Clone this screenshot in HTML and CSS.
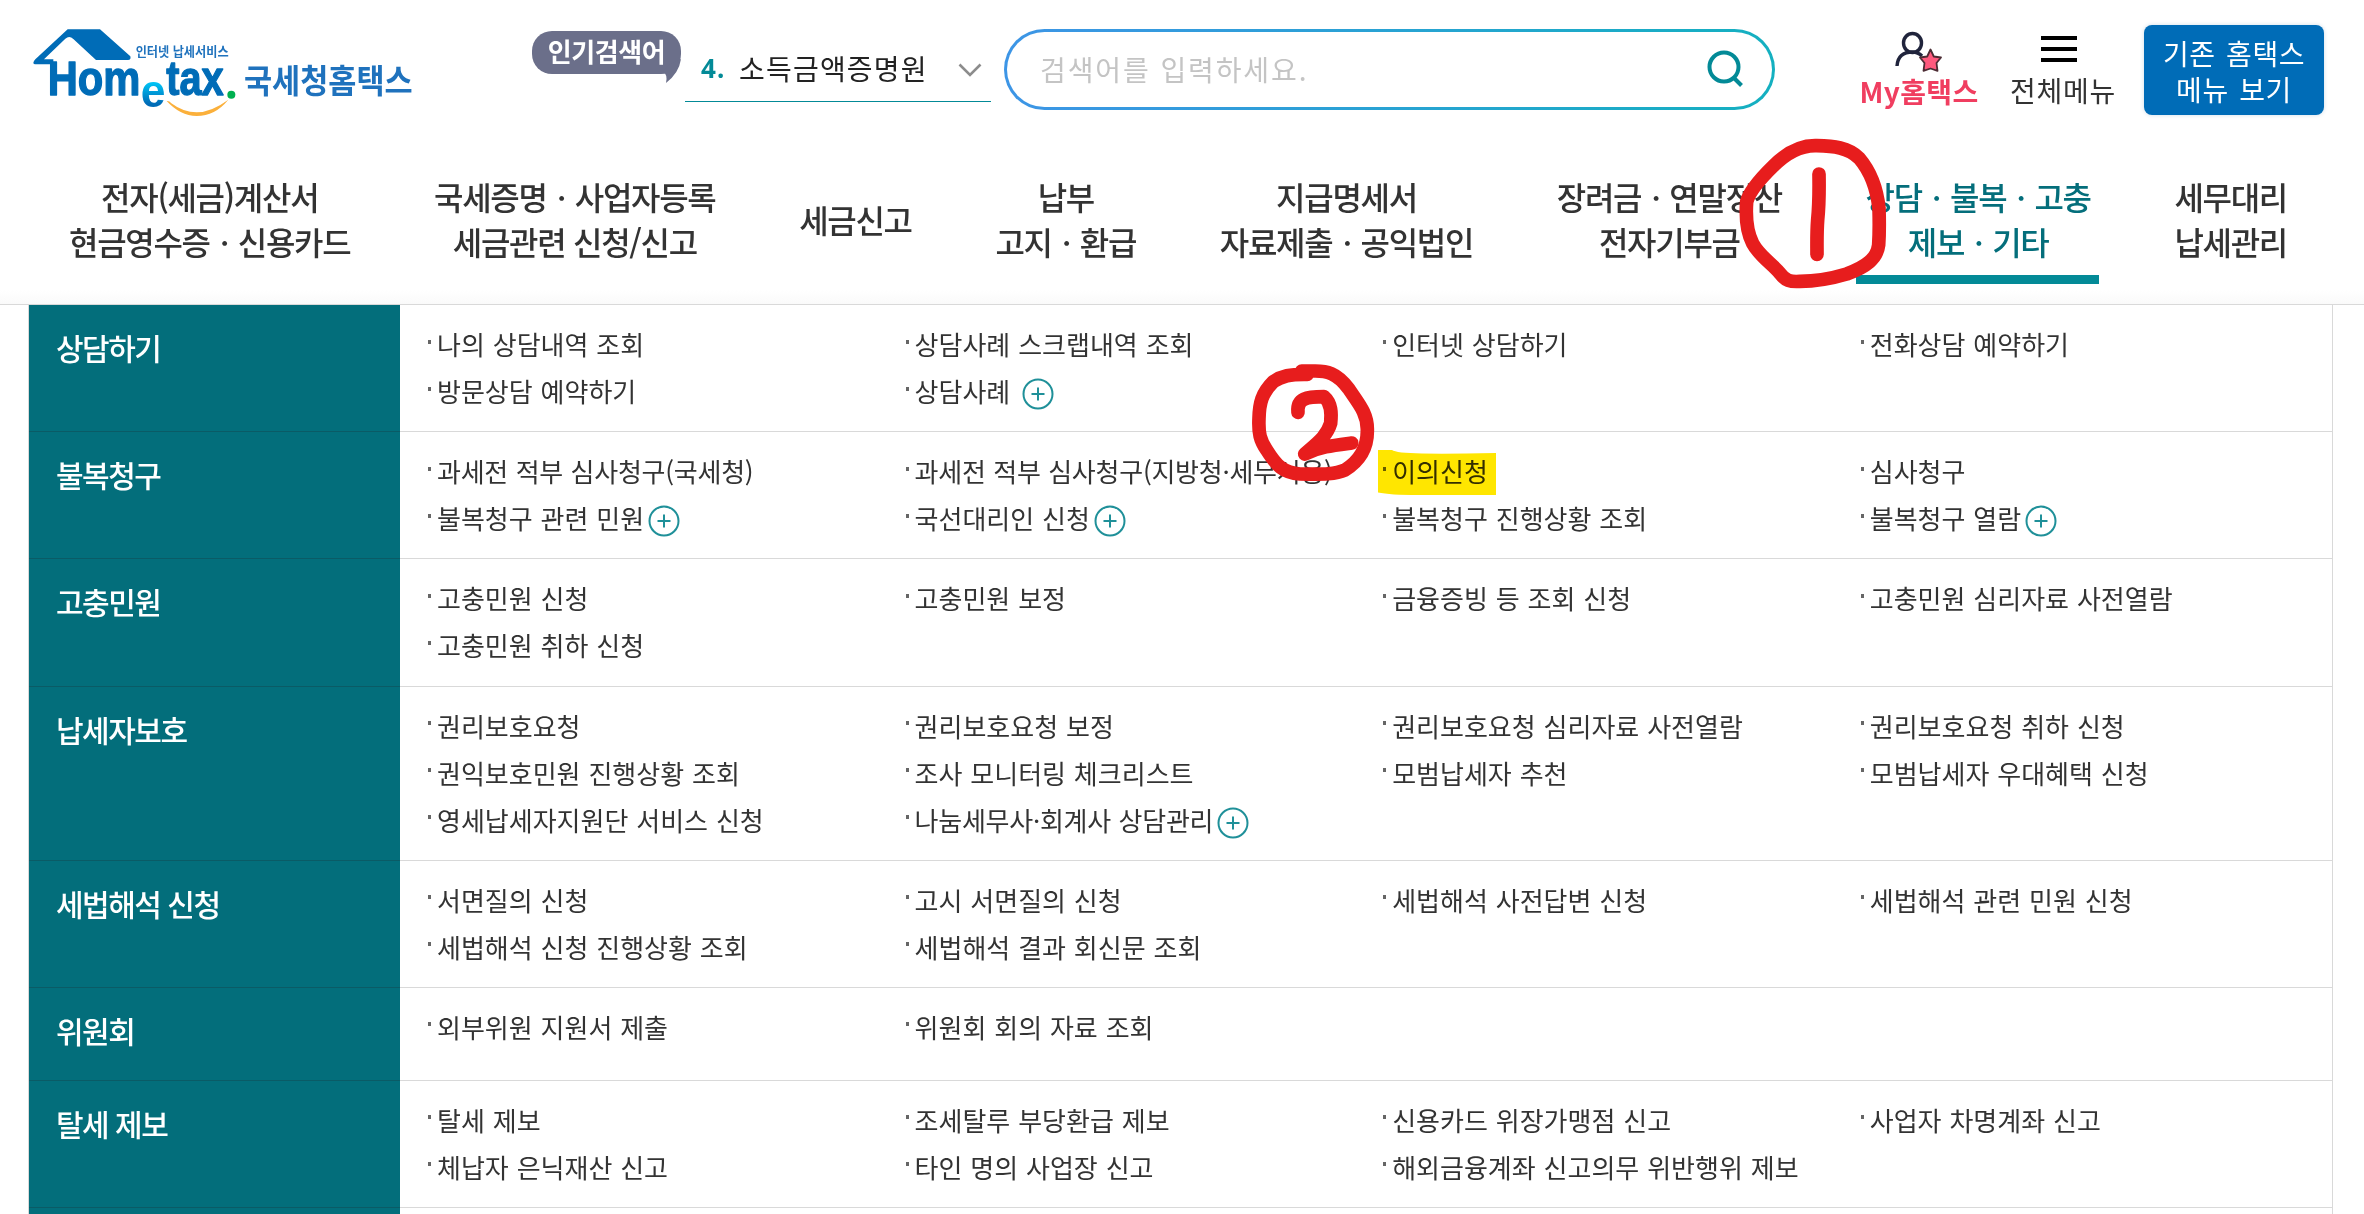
FILE: index.html
```
<!DOCTYPE html>
<html lang="ko">
<head>
    <meta charset="UTF-8">
    <meta name="viewport" content="width=device-width, initial-scale=1.0">
    <title>국세청 홈택스</title>
    <link rel="stylesheet" href="styles.css">
</head>
<body>
    <header>
        <div class="top-bar">
            <a class="logo">
                <svg width="480" height="130" viewBox="0 0 1440 390">
                    <defs>
                        <linearGradient id="e-fill" x1="0" y1="0" x2="0" y2="1">
                            <stop offset="0.35" stop-color="#00c3f5"/>
                            <stop offset="0.75" stop-color="#006cb7"/>
                        </linearGradient>
                    </defs>
                    <path fill="#006cb7" d="M100 188 Q101 183 106 178 L203 88 H300 L391 169 Q394 180 384 180 H288 L220 117 Q208 105 196 116 L132 178 H160 V193 H106 Q100 193 100 188Z"/>
                    <g class="logo-latin">
                        <text x="143" y="285" font-size="146" textLength="278" lengthAdjust="spacingAndGlyphs">Hom</text>
                        <text x="422" y="320" font-size="138" textLength="74" lengthAdjust="spacingAndGlyphs" fill="url(#e-fill)" stroke="none">e</text>
                        <text x="499" y="285" font-size="146" textLength="172" lengthAdjust="spacingAndGlyphs">tax</text>
                    </g>
                    <circle cx="694" cy="284" r="12" fill="#00b050"/>
                    <path fill="#fbb03b" d="M500 303 Q508 302 514 310 Q550 337 590 337 Q635 336 685 299 Q645 348 590 348 Q540 347 500 303Z"/>
                    <text class="logo-small" x="407" y="169" font-size="38" textLength="279" lengthAdjust="spacingAndGlyphs">인터넷 납세서비스</text>
                    <text class="logo-name" x="732" y="278" font-size="98" textLength="506" lengthAdjust="spacingAndGlyphs">국세청홈택스</text>
                </svg>
            </a>
            <span class="popular-badge">인기검색어
                <svg class="badge-tail" width="18" height="24" viewBox="0 0 18 24"><path fill="#6b6f8a" d="M0 12 Q5 16 3 24 Q16 14 18 0 L6 6Z"/></svg>
            </span>
            <div class="popular-word">
                <b>4.</b><span>소득금액증명원</span>
                <svg width="24" height="14" viewBox="0 0 24 14"><path d="M1.5 1.5 L12 12 L22.5 1.5" fill="none" stroke="#8c8c8c" stroke-width="2.6"/></svg>
            </div>
            <div class="search-box">
                <span>검색어를 입력하세요.</span>
                <svg width="38" height="38" viewBox="0 0 38 38" fill="none" stroke="#038a97" stroke-width="4"><circle cx="17" cy="17" r="14.5"/><path d="M26.5 27.5 L34.5 35.5"/></svg>
            </div>
            <a class="my-link">
                <svg width="48" height="42" viewBox="0 0 48 42">
                    <g fill="none" stroke="#20243c" stroke-width="3.4"><ellipse cx="17.5" cy="12" rx="9" ry="9.5"/><path d="M2 35 Q3 21 17.5 21 Q23 21 27 25"/></g>
                    <path d="M35.500 18.500 L38.800 25.500 L46 26.500 L41.500 32 L42.500 39.800 L35.500 37.500 L28.500 39.800 L29.500 32 L25 26.500 L32.200 25.500Z" fill="#ff5a7e" stroke="#4c2c34" stroke-width="1.8" stroke-linejoin="round"/>
                </svg>
                <span>My홈택스</span>
            </a>
            <a class="all-menu">
                <i></i><i></i><i></i>
                <span>전체메뉴</span>
            </a>
            <a class="old-button">기존 홈택스<br>메뉴 보기</a>
        </div>
        <nav>
            <a>전자(세금)계산서<br>현금영수증ㆍ신용카드</a>
            <a>국세증명ㆍ사업자등록<br>세금관련 신청/신고</a>
            <a>세금신고</a>
            <a>납부<br>고지ㆍ환급</a>
            <a>지급명세서<br>자료제출ㆍ공익법인</a>
            <a>장려금ㆍ연말정산<br>전자기부금</a>
            <a class="active">상담ㆍ불복ㆍ고충<br>제보ㆍ기타</a>
            <a>세무대리<br>납세관리</a>
        </nav>
    </header>

    <svg class="plus-symbol"><symbol id="plus" viewBox="0 0 32 32"><g fill="none" stroke="#1f9099" stroke-width="2"><circle cx="16" cy="16" r="14.500"/><path d="M9.500 16 H22.500 M16 9.500 V22.500"/></g></symbol></svg>

    <main>
        <section>
            <h2>상담하기</h2>
            <ul>
                <li>나의 상담내역 조회</li>
                <li>상담사례 스크랩내역 조회</li>
                <li>인터넷 상담하기</li>
                <li>전화상담 예약하기</li>
                <li>방문상담 예약하기</li>
                <li>상담사례 <svg class="plus"><use href="#plus"/></svg></li>
            </ul>
        </section>
        <section>
            <h2>불복청구</h2>
            <ul>
                <li class="tight">과세전 적부 심사청구(국세청)</li>
                <li class="tight">과세전 적부 심사청구(지방청·세무서용)</li>
                <li>이의신청</li>
                <li>심사청구</li>
                <li>불복청구 관련 민원<svg class="plus"><use href="#plus"/></svg></li>
                <li>국선대리인 신청<svg class="plus"><use href="#plus"/></svg></li>
                <li>불복청구 진행상황 조회</li>
                <li>불복청구 열람<svg class="plus"><use href="#plus"/></svg></li>
            </ul>
        </section>
        <section>
            <h2>고충민원</h2>
            <ul>
                <li>고충민원 신청</li>
                <li>고충민원 보정</li>
                <li>금융증빙 등 조회 신청</li>
                <li>고충민원 심리자료 사전열람</li>
                <li>고충민원 취하 신청</li>
            </ul>
        </section>
        <section>
            <h2>납세자보호</h2>
            <ul>
                <li>권리보호요청</li>
                <li>권리보호요청 보정</li>
                <li>권리보호요청 심리자료 사전열람</li>
                <li>권리보호요청 취하 신청</li>
                <li>권익보호민원 진행상황 조회</li>
                <li>조사 모니터링 체크리스트</li>
                <li>모범납세자 추천</li>
                <li>모범납세자 우대혜택 신청</li>
                <li>영세납세자지원단 서비스 신청</li>
                <li class="tight">나눔세무사·회계사 상담관리<svg class="plus"><use href="#plus"/></svg></li>
            </ul>
        </section>
        <section>
            <h2>세법해석 신청</h2>
            <ul>
                <li>서면질의 신청</li>
                <li>고시 서면질의 신청</li>
                <li>세법해석 사전답변 신청</li>
                <li>세법해석 관련 민원 신청</li>
                <li>세법해석 신청 진행상황 조회</li>
                <li>세법해석 결과 회신문 조회</li>
            </ul>
        </section>
        <section>
            <h2>위원회</h2>
            <ul>
                <li>외부위원 지원서 제출</li>
                <li>위원회 회의 자료 조회</li>
            </ul>
        </section>
        <section>
            <h2>탈세 제보</h2>
            <ul>
                <li>탈세 제보</li>
                <li>조세탈루 부당환급 제보</li>
                <li>신용카드 위장가맹점 신고</li>
                <li>사업자 차명계좌 신고</li>
                <li>체납자 은닉재산 신고</li>
                <li>타인 명의 사업장 신고</li>
                <li>해외금융계좌 신고의무 위반행위 제보</li>
            </ul>
        </section>
        <div class="next-row"></div>
    </main>

    <!-- Hand-drawn step marks over the page -->
    <svg class="mark mark-one" width="220" height="180" viewBox="0 0 660 540">
        <path d="M350 77 C295 75 255 103 220 138 C180 177 148 215 140 245 C136 300 145 345 158 370 C178 408 215 430 240 460 C257 482 270 486 300 484 C350 484 400 474 440 462 C500 440 531 415 536 375 C539 330 538 300 537 265 C530 200 512 155 478 115 C445 82 400 78 350 77Z"/>
        <path d="M357 162 C358 220 358 250 353 300 C350 340 351 370 351 403"/>
    </svg>
    <svg class="mark mark-two" width="320" height="160" viewBox="0 0 960 480">
        <path d="M322 103 C270 102 245 108 220 125 C185 160 178 190 177 235 C175 280 180 300 200 330 C230 378 250 398 300 402 C350 402 400 406 435 390 C475 365 503 325 502 270 C503 220 475 190 445 145 C410 98 380 92 340 93 L305 93"/>
        <path d="M294 217 C290 175 320 170 372 170 C395 190 395 220 392 250 C380 290 350 310 314 342 C360 320 400 316 455 309"/>
    </svg>
    <svg class="highlight" width="118" height="46" viewBox="0 0 118 46"><path fill="#ffe600" d="M0 0 H14 Q18 3 44 3.500 Q70 4 118 3 V45 H40 Q12 45 0 42.500Z"/></svg>
</body>
</html>
```
FILE: styles.css
```
* {
    box-sizing: border-box;
}

html {
    overflow: hidden;
}

body {
    margin: 0;
    height: 1214px;
    overflow: hidden;
    position: relative;
    background-color: #fff;
    color: #333;
    font-family: 'Noto Sans CJK KR', 'Noto Sans', sans-serif;
}

header {
    height: 305px;
    border-bottom: 1px solid #d9d9d9;
    background: linear-gradient(#fff 290px, #fafafa);
}

.top-bar {
    display: flex;
    align-items: flex-start;
    height: 130px;
}

.logo {
    width: 532px;
}

.logo-latin {
    font-family: 'Liberation Sans', sans-serif;
    font-weight: bold;
    fill: #006cb7;
    stroke: #006cb7;
    stroke-width: 4;
    stroke-linejoin: round;
}

.logo-small,
.logo-name {
    font-weight: bold;
    fill: #1f72bd;
}

.popular-badge {
    position: relative;
    width: 149px;
    height: 43px;
    margin-top: 31px;
    border-radius: 20px;
    background-color: #6b6f8a;
    color: #fff;
    font-size: 26px;
    font-weight: bold;
    line-height: 39px;
    letter-spacing: -0.4px;
    text-align: center;
}

.badge-tail {
    position: absolute;
    right: 0;
    top: 28px;
}

.popular-word {
    display: flex;
    align-items: center;
    width: 306px;
    height: 64px;
    margin: 38px 13px 0 4px;
    padding: 0 9px 3px 16px;
    border-bottom: 1px solid #038a97;
    color: #222;
    font-size: 28px;
    letter-spacing: 1.2px;
}

.popular-word b {
    width: 38px;
    color: #038a97;
    font-family: 'Noto Sans', sans-serif;
    font-size: 26px;
}

.popular-word svg {
    margin: 4px 0 0 auto;
}

.search-box {
    display: flex;
    align-items: center;
    justify-content: space-between;
    width: 771px;
    height: 81px;
    margin-top: 29px;
    padding: 0 27px 2px 33px;
    border: 3px solid transparent;
    border-radius: 41px;
    background: linear-gradient(#fff, #fff) padding-box, linear-gradient(90deg, #3d95e6, #14b0c0) border-box;
    color: #c4c4c4;
    font-size: 28px;
    letter-spacing: 1.9px;
}

.my-link {
    display: flex;
    flex-direction: column;
    align-items: center;
    width: 124px;
    margin: 31px 0 0 82px;
    color: #f03e60;
    font-size: 28px;
    font-weight: bold;
    line-height: 36px;
    letter-spacing: 0.4px;
}

.all-menu {
    display: flex;
    flex-direction: column;
    align-items: center;
    gap: 7px;
    width: 110px;
    margin: 36px 0 0 27px;
    font-size: 28px;
    line-height: 36px;
}

.all-menu i {
    width: 36px;
    height: 4px;
    margin-right: 8px;
    background-color: #000;
}

.all-menu span {
    margin-top: 3px;
    letter-spacing: 0.8px;
}

.old-button {
    width: 180px;
    height: 90px;
    margin: 25px 0 0 26px;
    padding-top: 10px;
    border-radius: 8px;
    background-color: #006cb7;
    box-shadow: 0 0 4px #cfdde8;
    color: #fff;
    font-size: 28px;
    line-height: 36px;
    letter-spacing: 0.6px;
    word-spacing: 2px;
    text-align: center;
}

nav {
    display: flex;
    align-items: center;
    justify-content: space-between;
    height: 174px;
    padding: 4px 77px 0 69px;
    font-size: 32px;
    font-weight: 500;
    line-height: 45px;
    letter-spacing: -1.3px;
    text-align: center;
    white-space: nowrap;
}

nav .active {
    position: relative;
    color: #046e7b;
}

nav .active::after {
    content: '';
    position: absolute;
    left: -10px;
    right: -8px;
    bottom: -20px;
    height: 9px;
    background-color: #038a97;
}

.plus-symbol {
    display: none;
}

main {
    height: 909px;
    margin: 0 31px 0 28px;
    border: solid #d9d9d9;
    border-width: 0 1px;
    overflow: hidden;
}

section {
    display: flex;
    min-height: 93px;
}

h2 {
    width: 371px;
    margin: 0;
    padding: 20px 27px 0;
    border-bottom: 1px solid #0a5b66;
    background-color: #036e7b;
    color: #fff;
    font-size: 30px;
    font-weight: 500;
    line-height: 45px;
    letter-spacing: -0.05em;
}

ul {
    flex: 1;
    display: grid;
    grid-template-columns: repeat(4, 477.6px);
    grid-auto-rows: 47px;
    margin: 0;
    padding: 15px 0 17.2px 28px;
    width: 0;
    border-bottom: 1px solid #d9d9d9;
    list-style: none;
}

.next-row {
    width: 371px;
    height: 10px;
    background-color: #036e7b;
}

li {
    display: flex;
    align-items: center;
    font-size: 26px;
    word-spacing: 0.6px;
    white-space: pre;
}

li::before {
    content: '';
    width: 3px;
    height: 4px;
    margin: -4px 6px 0 0;
    background-color: #666;
}

.tight {
    letter-spacing: -0.25px;
}

.plus {
    width: 32px;
    height: 32px;
    margin: 7px 0 0 4px;
}

.mark,
.highlight {
    position: absolute;
}

.mark path {
    fill: none;
    stroke: #e71d1d;
    stroke-width: 41;
    stroke-linecap: round;
    stroke-linejoin: round;
}

.mark-one {
    left: 1700px;
    top: 120px;
}

.mark-two {
    left: 1200px;
    top: 340px;
}

.highlight {
    left: 1378px;
    top: 450px;
    mix-blend-mode: multiply;
}
```
